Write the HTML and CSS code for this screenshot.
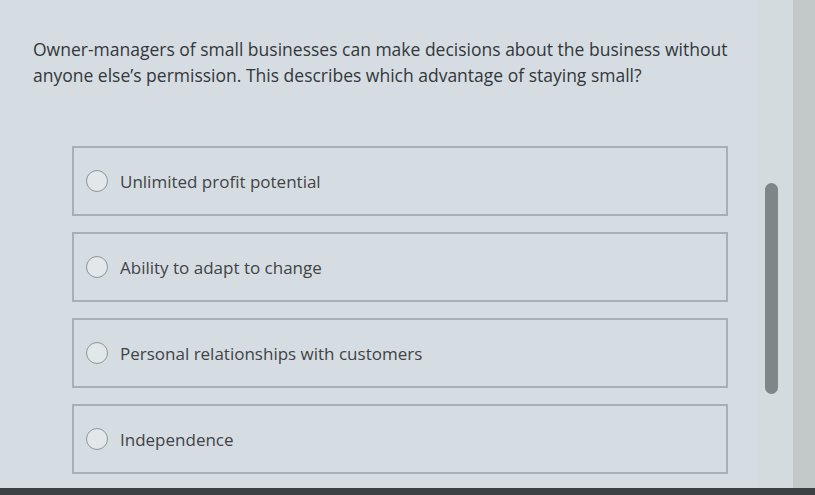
FILE: index.html
```html
<!DOCTYPE html>
<html lang="en">
<head>
   <meta charset="UTF-8">
   <title>Question</title>
   <link rel="stylesheet" href="styles.css">
</head>
<body>
   <div class="screen">
      <main class="quiz">
         <p class="question">Owner-managers of small businesses can make decisions about the business without anyone else’s permission. This describes which advantage of staying small?</p>
         <ul class="choices">
            <li class="choice"><span class="radio"></span><span class="label">Unlimited profit potential</span></li>
            <li class="choice"><span class="radio"></span><span class="label">Ability to adapt to change</span></li>
            <li class="choice"><span class="radio"></span><span class="label">Personal relationships with customers</span></li>
            <li class="choice"><span class="radio"></span><span class="label">Independence</span></li>
         </ul>
      </main>
      <aside class="rail">
         <div class="thumb"></div>
      </aside>
   </div>
   <div class="taskbar"></div>
</body>
</html>
```

FILE: styles.css
```css
* { box-sizing: border-box; }
body {
   margin: 0;
   height: 495px;
   overflow: hidden;
   font-family: 'Open Sans', 'Noto Sans', sans-serif;
   background: #d6dde2;
   color: #3a3d40;
   display: flex;
   flex-direction: column;
}
.screen {
   flex: 1;
   display: flex;
}
.quiz {
   flex: 1;
   padding: 36px 0 0 33px;
}
.question {
   margin: 0;
   font-size: 17.5px;
   line-height: 26px;
   width: 720px;
   color: #33373a;
}
.choices {
   list-style: none;
   margin: 58px 0 0 39px;
   padding: 0;
   width: 656px;
   display: flex;
   flex-direction: column;
   gap: 16px;
}
.choice {
   height: 70px;
   border: 2px solid #a9afb3;
   display: flex;
   align-items: center;
   padding-left: 12px;
   gap: 12px;
}
.radio {
   width: 22px;
   height: 22px;
   border: 1.5px solid #8e9498;
   border-radius: 50%;
   background: #e2e7ea;
}
.label {
   font-size: 17px;
   color: #3f4347;
}
.rail {
   width: 58px;
   display: flex;
   padding: 183px 0 0 0;
   background: linear-gradient(90deg, #d4dbdf 0, #d4dbdf 36px, #c3c8c9 36px);
}
.thumb {
   width: 13px;
   height: 211px;
   margin-left: 8px;
   border-radius: 7px;
   background: #7f8687;
}
.taskbar {
   height: 7px;
   background: #3d4043;
}
```
